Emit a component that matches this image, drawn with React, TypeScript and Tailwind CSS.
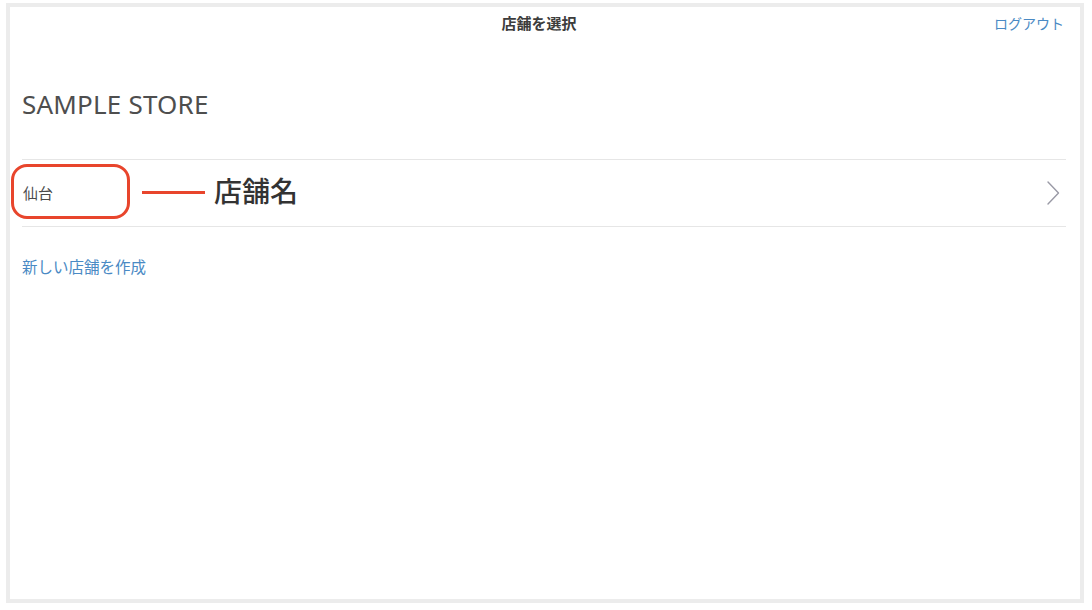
const jp = '"Noto Sans", "Noto Sans CJK JP", sans-serif';

function Chevron() {
  return (
    <svg width="14" height="24" viewBox="0 0 14 24" fill="none" className="mr-[6px]">
      <polyline points="2,1 12.5,12 2,23" stroke="#9a9aa6" strokeWidth="1.4" strokeLinecap="round" strokeLinejoin="round" />
    </svg>
  );
}

export default function App() {
  return (
    <div className="w-[1092px] h-[610px] bg-white pt-[3px] pl-[6px]" style={{ fontFamily: jp }}>
      <div className="w-[1078px] h-[600px] border-4 border-[#ececec] bg-white">
        <header className="h-[33px] grid grid-cols-[1fr_auto_1fr] items-center pl-[12px] pr-[16px]">
          <div />
          <h1 className="text-[15px] font-bold text-[#3c3c3c] mr-[8px]">店舗を選択</h1>
          <button type="button" className="justify-self-end text-[14px] text-[#4a8ac4]">
            ログアウト
          </button>
        </header>

        <div className="pl-[12px] pr-[14px]">
          <h2 className="mt-[46px] h-[36px] leading-[36px] text-[26px] text-[#4e4e4e] tracking-[0.2px]">
            SAMPLE STORE
          </h2>

          <div className="relative mt-[37px] h-[68px] border-y border-[#e6e6e6] flex items-center justify-between">
            <span className="text-[15px] text-[#4a4a4a] pl-[1px] pt-[1px]">仙台</span>
            <Chevron />

            {/* annotation */}
            <div className="absolute left-[-11px] top-[4px] w-[119px] h-[55px] rounded-[16px] border-[3px] border-[#e8452c]" />
            <div className="absolute left-[120px] top-[31px] w-[63px] h-[3px] bg-[#e8452c]" />
            <span className="absolute left-[192px] top-[12px] text-[28px] leading-[38px] font-medium text-[#333]">
              店舗名
            </span>
          </div>

          <button type="button" className="mt-[30px] text-[15.5px] text-[#4a8ac4] leading-[20px]">
            新しい店舗を作成
          </button>
        </div>
      </div>
    </div>
  );
}
